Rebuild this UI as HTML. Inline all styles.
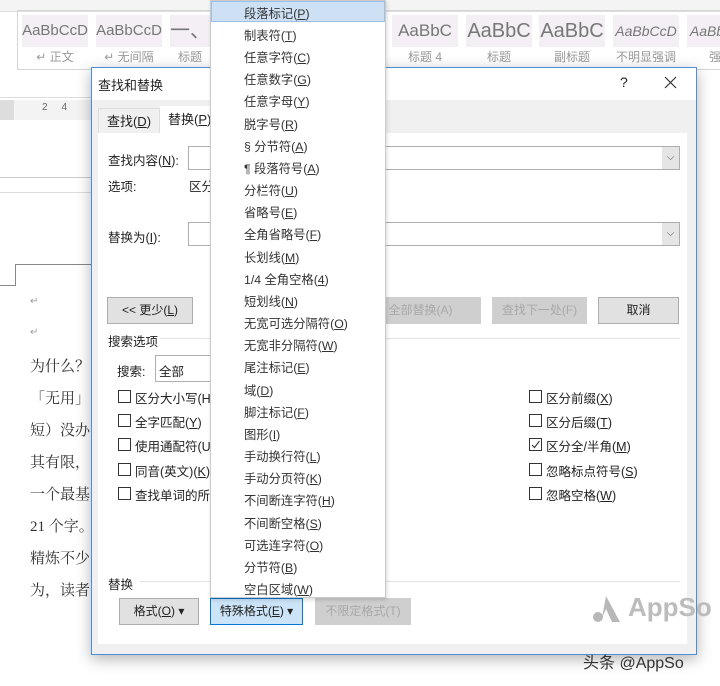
<!DOCTYPE html>
<html><head><meta charset="utf-8"><style>
*{margin:0;padding:0;box-sizing:border-box}
body{width:720px;height:686px;overflow:hidden;background:#fff;position:relative;font-family:"Liberation Sans","Microsoft YaHei","Noto Sans CJK SC",sans-serif;font-size:12px;color:#222}
.a{position:absolute;white-space:nowrap}
.sty{position:absolute;top:15px;height:32px;background:#f3eff4;font-size:15px;color:#777;text-align:center;line-height:32px;overflow:hidden}
.lbl{position:absolute;top:48px;font-size:12px;color:#999;text-align:center}
.doc{position:absolute;left:30px;font-family:"Liberation Serif","Noto Serif CJK SC",serif;font-size:15px;color:#333}
.btn{position:absolute;height:27px;border:1px solid #adadad;background:#e1e1e1;text-align:center;line-height:25px;font-size:12px}
.dis{color:#a8a8a8;background:#cfcfcf;border-color:#cfcfcf}
.cb{position:absolute;width:13px;height:13px;border:1px solid #333;background:#fff}
.mi{position:absolute;left:33px;font-size:12.3px;color:#333}
u{text-decoration:underline}
</style></head><body>
<div class="a" style="left:0;top:0;width:720px;height:12px;background:#f4f4f4;border-bottom:1px solid #ddd"></div>
<div class="a" style="left:17px;top:10px;width:703px;height:60px;border:1px solid #d6d6d6;border-right:none"></div>
<div class="sty" style="left:22px;width:66px">AaBbCcD</div><div class="lbl" style="left:22px;width:66px">↵ 正文</div>
<div class="sty" style="left:96px;width:66px">AaBbCcD</div><div class="lbl" style="left:96px;width:66px">↵ 无间隔</div>
<div class="sty" style="left:170px;width:40px;font-size:20px">一、</div><div class="lbl" style="left:170px;width:40px">标题</div>
<div class="sty" style="left:392px;width:66px;font-size:17px">AaBbC</div><div class="lbl" style="left:392px;width:66px">标题 4</div>
<div class="sty" style="left:466px;width:66px;font-size:20px">AaBbC</div><div class="lbl" style="left:466px;width:66px">标题</div>
<div class="sty" style="left:539px;width:66px;font-size:20px">AaBbC</div><div class="lbl" style="left:539px;width:66px">副标题</div>
<div class="sty" style="left:613px;width:66px;font-style:italic;font-size:14px">AaBbCcD</div><div class="lbl" style="left:613px;width:66px">不明显强调</div>
<div class="sty" style="left:687px;width:40px;font-style:italic;font-size:14px">AaBb</div><div class="lbl" style="left:700px;width:30px">强</div>
<div class="a" style="left:0;top:97px;width:91px;height:1px;background:#ddd"></div>
<div class="a" style="left:0;top:100px;width:91px;height:20px;background:#f3f3f3"></div>
<div class="a" style="left:0;top:100px;width:14px;height:20px;background:#ddd"></div>
<div class="a" style="left:42px;top:102px;font-size:10px;color:#666">2 &nbsp; &nbsp; 4</div>
<div class="a" style="left:0;top:177px;width:91px;height:1px;background:#ccc"></div>
<div class="a" style="left:0;top:192px;width:91px;height:1px;background:#ddd"></div>
<div class="a" style="left:15px;top:264px;width:76px;height:1px;background:#888"></div>
<div class="a" style="left:15px;top:264px;width:1px;height:22px;background:#888"></div>
<div class="a" style="left:0;top:285px;width:15px;height:1px;background:#888"></div>
<div class="doc" style="top:296px;font-size:10px;color:#999">↵</div>
<div class="doc" style="top:327px;font-size:10px;color:#999">↵</div>
<div class="doc" style="top:355px">为什么？</div>
<div class="doc" style="top:387px">「无用」</div>
<div class="doc" style="top:419px">短）没办</div>
<div class="doc" style="top:451px">其有限，</div>
<div class="doc" style="top:483px">一个最基</div>
<div class="doc" style="top:515px">21 个字。</div>
<div class="doc" style="top:547px">精炼不少</div>
<div class="doc" style="top:579px">为，读者</div>
<div class="a" style="left:91px;top:67px;width:606px;height:588px;background:#f0f0f0;border:1px solid #4a90d9;box-shadow:0 4px 14px rgba(0,0,0,.3)"></div>
<div class="a" style="left:92px;top:68px;width:604px;height:32px;background:#fff"></div>
<div class="a" style="left:98px;top:75px;font-size:13px">查找和替换</div>
<div class="a" style="left:620px;top:74px;font-size:14px">?</div>
<svg class="a" style="left:664px;top:76px" width="13" height="13"><path d="M1 1L12 12M12 1L1 12" stroke="#333" stroke-width="1.2"/></svg>
<div class="a" style="left:98px;top:108px;width:62px;height:26px;background:#f0f0f0;border:1px solid #ddd;font-size:13px;line-height:26px;text-align:center">查找(<u>D</u>)</div>
<div class="a" style="left:160px;top:106px;width:52px;height:28px;background:#fff;font-size:13px;line-height:28px;padding-left:8px">替换(<u>P</u>)</div>
<div class="a" style="left:98px;top:133px;width:589px;height:511px;background:#fff"></div>
<div class="a" style="left:108px;top:150px;font-size:12.5px">查找内容(<u>N</u>):</div>
<div class="a" style="left:188px;top:146px;width:492px;height:24px;border:1px solid #adadad;background:#fff"></div>
<div class="a" style="left:662px;top:147px;width:17px;height:22px;background:#e5e5e5;font-size:10px;text-align:center;line-height:22px;color:#555">⌵</div>
<div class="a" style="left:108px;top:176px;font-size:12.5px">选项:</div>
<div class="a" style="left:189px;top:176px;font-size:12.5px">区分</div>
<div class="a" style="left:108px;top:227px;font-size:12.5px">替换为(<u>I</u>):</div>
<div class="a" style="left:188px;top:222px;width:492px;height:24px;border:1px solid #adadad;background:#fff"></div>
<div class="a" style="left:662px;top:223px;width:17px;height:22px;background:#e5e5e5;font-size:10px;text-align:center;line-height:22px;color:#555">⌵</div>
<div class="btn" style="left:107px;top:297px;width:86px">&lt;&lt; 更少(<u>L</u>)</div>
<div class="btn dis" style="left:360px;top:297px;width:121px">全部替换(A)</div>
<div class="btn dis" style="left:492px;top:297px;width:95px">查找下一处(F)</div>
<div class="btn" style="left:598px;top:297px;width:81px">取消</div>
<div class="a" style="left:160px;top:338px;width:520px;height:1px;background:#e3e3e3"></div>
<div class="a" style="left:108px;top:331px;font-size:12.5px">搜索选项</div>
<div class="a" style="left:117px;top:361px;font-size:12.5px">搜索:</div>
<div class="a" style="left:155px;top:355px;width:60px;height:27px;border:1px solid #adadad;padding:5px 3px;font-size:12.5px">全部</div>
<div class="cb" style="left:118px;top:390px"></div><div class="a" style="left:135px;top:388px;font-size:12.5px">区分大小写(H</div>
<div class="cb" style="left:118px;top:414px"></div><div class="a" style="left:135px;top:412px;font-size:12.5px">全字匹配(<u>Y</u>)</div>
<div class="cb" style="left:118px;top:438px"></div><div class="a" style="left:135px;top:436px;font-size:12.5px">使用通配符(U</div>
<div class="cb" style="left:118px;top:463px"></div><div class="a" style="left:135px;top:461px;font-size:12.5px">同音(英文)(<u>K</u>)</div>
<div class="cb" style="left:118px;top:487px"></div><div class="a" style="left:135px;top:485px;font-size:12.5px">查找单词的所</div>
<div class="cb" style="left:529px;top:390px"></div><div class="a" style="left:546px;top:388px;font-size:12.5px">区分前缀(<u>X</u>)</div>
<div class="cb" style="left:529px;top:414px"></div><div class="a" style="left:546px;top:412px;font-size:12.5px">区分后缀(<u>T</u>)</div>
<div class="cb" style="left:529px;top:438px"><svg width="11" height="11" style="position:absolute;left:0;top:0"><path d="M2 6L4.5 8.5L9.5 2" stroke="#333" fill="none" stroke-width="1.1"/></svg></div><div class="a" style="left:546px;top:436px;font-size:12.5px">区分全/半角(<u>M</u>)</div>
<div class="cb" style="left:529px;top:463px"></div><div class="a" style="left:546px;top:461px;font-size:12.5px">忽略标点符号(<u>S</u>)</div>
<div class="cb" style="left:529px;top:487px"></div><div class="a" style="left:546px;top:485px;font-size:12.5px">忽略空格(<u>W</u>)</div>
<div class="a" style="left:140px;top:581px;width:540px;height:1px;background:#e3e3e3"></div>
<div class="a" style="left:108px;top:574px;font-size:12.5px">替换</div>
<div class="btn" style="left:119px;top:598px;width:80px">格式(<u>O</u>) ▾</div>
<div class="btn" style="left:210px;top:598px;width:93px;background:#cce4f7;border-color:#0078d7">特殊格式(<u>E</u>) ▾</div>
<div class="btn dis" style="left:315px;top:598px;width:96px">不限定格式(T)</div>
<svg class="a" style="left:590px;top:594px" width="32" height="30"><path d="M16 2L30 28H22L16 15L12 24Z" fill="#b8b8b8"/><circle cx="8" cy="23" r="5" fill="#b8b8b8"/></svg>
<div class="a" style="left:628px;top:592px;font-size:26px;font-weight:bold;color:#bcbcbc">AppSo</div>
<div class="a" style="left:583px;top:649px;font-size:16px;color:#333">头条 @AppSo</div>
<div class="a" style="left:210px;top:0;width:176px;height:598px;background:#fff;border:1px solid #ccc;box-shadow:1px 2px 4px rgba(0,0,0,.15)">
<div class="a" style="left:0;top:0;width:174px;height:21px;background:#cde0f4;border:1px solid #9cbfe6"></div>
<div class="mi" style="top:3px">段落标记(<u>P</u>)</div>
<div class="mi" style="top:25px">制表符(<u>T</u>)</div>
<div class="mi" style="top:47px">任意字符(<u>C</u>)</div>
<div class="mi" style="top:69px">任意数字(<u>G</u>)</div>
<div class="mi" style="top:91px">任意字母(<u>Y</u>)</div>
<div class="mi" style="top:114px">脱字号(<u>R</u>)</div>
<div class="mi" style="top:136px">§ 分节符(<u>A</u>)</div>
<div class="mi" style="top:158px">¶ 段落符号(<u>A</u>)</div>
<div class="mi" style="top:180px">分栏符(<u>U</u>)</div>
<div class="mi" style="top:202px">省略号(<u>E</u>)</div>
<div class="mi" style="top:224px">全角省略号(<u>F</u>)</div>
<div class="mi" style="top:247px">长划线(<u>M</u>)</div>
<div class="mi" style="top:269px">1/4 全角空格(<u>4</u>)</div>
<div class="mi" style="top:291px">短划线(<u>N</u>)</div>
<div class="mi" style="top:313px">无宽可选分隔符(<u>O</u>)</div>
<div class="mi" style="top:335px">无宽非分隔符(<u>W</u>)</div>
<div class="mi" style="top:357px">尾注标记(<u>E</u>)</div>
<div class="mi" style="top:380px">域(<u>D</u>)</div>
<div class="mi" style="top:402px">脚注标记(<u>F</u>)</div>
<div class="mi" style="top:424px">图形(<u>I</u>)</div>
<div class="mi" style="top:446px">手动换行符(<u>L</u>)</div>
<div class="mi" style="top:468px">手动分页符(<u>K</u>)</div>
<div class="mi" style="top:490px">不间断连字符(<u>H</u>)</div>
<div class="mi" style="top:513px">不间断空格(<u>S</u>)</div>
<div class="mi" style="top:535px">可选连字符(<u>O</u>)</div>
<div class="mi" style="top:557px">分节符(<u>B</u>)</div>
<div class="mi" style="top:579px">空白区域(<u>W</u>)</div>
</div>
</body></html>
